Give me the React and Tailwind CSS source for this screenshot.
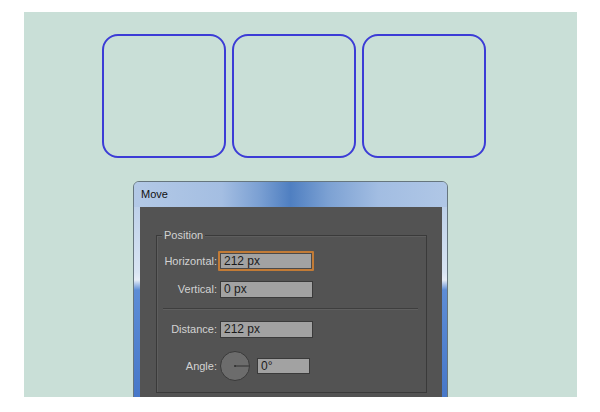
import React from "react";

const Field = ({ label, value, focused }) => (
  <div className="flex items-center h-[20px]">
    <span className="w-[60px] text-right text-[11px] text-[#d2d2d2]">{label}</span>
    {focused ? (
      <div className="ml-[1px] w-[96px] h-[20px] border-2 border-[#c27b36] rounded-[1px]">
        <div className="w-full h-full bg-[#a2a2a2] border border-[#4a4a4a] flex items-center pl-[3px] text-[12px] text-[#1b1b1b]">
          {value}
        </div>
      </div>
    ) : (
      <div className="ml-[3px] w-[93px] h-[17px] bg-[#a2a2a2] border border-[#3a3a3a] flex items-center pl-[3px] text-[12px] text-[#1b1b1b]">
        {value}
      </div>
    )}
  </div>
);

const App = () => {
  return (
    <div className="w-[600px] h-[412px] bg-white pt-[12px] pl-[24px] font-['Liberation_Sans',Arial,sans-serif]">
      <div className="w-[553px] h-[385px] bg-[#c9dfd7] overflow-hidden">
        {/* three rounded squares */}
        <div className="flex gap-[6px] pl-[78px] pt-[22px]">
          <div className="w-[124px] h-[124px] rounded-[16px] border-2 border-[#3c3cd6]" />
          <div className="w-[124px] h-[124px] rounded-[16px] border-2 border-[#3c3cd6]" />
          <div className="w-[124px] h-[124px] rounded-[16px] border-2 border-[#3c3cd6]" />
        </div>

        {/* Move dialog */}
        <div className="ml-[109px] mt-[23px] w-[315px] h-[240px] rounded-t-[6px] border border-[#66767e] bg-[linear-gradient(to_bottom,#b4cae6_0px,#d8e4f2_90px,#e6edf6_98px,#5d8dd6_108px,#4273c6_100%)] flex flex-col">
          <div className="h-[25px] shrink-0 rounded-t-[5px] bg-[linear-gradient(to_right,#b3c9e6_0%,#a4bee2_28%,#7ba0d3_40%,#4f7fc1_50%,#7ca1d3_62%,#a2bde2_78%,#b0c7e6_100%)] flex items-center pl-[7px] text-[11px] text-[#111]">
            Move
          </div>
          <div className="flex-1 ml-[6px] mr-[5px] bg-[#535353] pt-[28px] pl-[16px]">
            <div className="w-[271px] h-[158px] border border-[#3a3a3a] shadow-[inset_1px_1px_0_#5e5e5e] flex flex-col">
              <span className="block w-fit ml-[5px] px-[2px] -mt-[8px] h-[14px] leading-[14px] text-[11px] text-[#d2d2d2] bg-[#535353]">
                Position
              </span>
              <div className="mt-[9px]">
                <Field label="Horizontal:" value="212 px" focused />
              </div>
              <div className="mt-[8px]">
                <Field label="Vertical:" value="0 px" />
              </div>
              <div className="mt-[9px] ml-[6px] mr-[8px] h-[1px] bg-[#3e3e3e] shadow-[0_1px_0_#5f5f5f]" />
              <div className="mt-[10px]">
                <Field label="Distance:" value="212 px" />
              </div>
              <div className="mt-[12px] flex items-center h-[30px]">
                <span className="w-[60px] text-right text-[11px] text-[#d2d2d2]">Angle:</span>
                <div className="ml-[3px] w-[30px] h-[30px] rounded-full bg-[#6c6c6c] border border-[#3a3a3a] flex items-center justify-center">
                  <svg width="28" height="28" viewBox="0 0 28 28">
                    <line x1="14" y1="14" x2="28" y2="14" stroke="#2e2e2e" strokeWidth="1" />
                    <circle cx="14" cy="14" r="1" fill="#2e2e2e" />
                  </svg>
                </div>
                <div className="ml-[7px] w-[53px] h-[16px] bg-[#a2a2a2] border border-[#3a3a3a] flex items-center pl-[3px] text-[12px] text-[#1b1b1b]">
                  0°
                </div>
              </div>
            </div>
          </div>
        </div>
      </div>
    </div>
  );
};

export default App;
